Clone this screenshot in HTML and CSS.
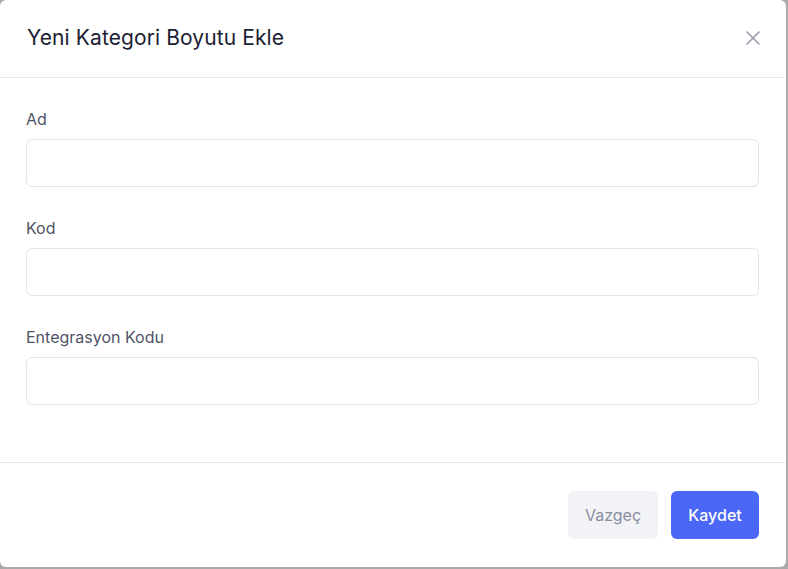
FILE: index.html
```html
<!DOCTYPE html>
<html lang="tr">
<head>
<meta charset="utf-8">
<title>Yeni Kategori Boyutu Ekle</title>
<link rel="stylesheet" href="styles.css">
</head>
<body>
<div class="modal">
  <header class="modal-header">
    <h2 class="modal-title">Yeni Kategori Boyutu Ekle</h2>
    <button class="close-btn" aria-label="Kapat">
      <svg width="14" height="14" viewBox="0 0 14 14"><path d="M1 1L13 13M13 1L1 13" stroke="currentColor" stroke-width="1.6" stroke-linecap="round"/></svg>
    </button>
  </header>
  <div class="modal-body">
    <div class="field">
      <label class="field-label">Ad</label>
      <input class="field-input" type="text">
    </div>
    <div class="field">
      <label class="field-label">Kod</label>
      <input class="field-input" type="text">
    </div>
    <div class="field">
      <label class="field-label">Entegrasyon Kodu</label>
      <input class="field-input" type="text">
    </div>
  </div>
  <footer class="modal-footer">
    <button class="btn btn-secondary">Vazgeç</button>
    <button class="btn btn-primary">Kaydet</button>
  </footer>
</div>
</body>
</html>
```
FILE: styles.css
```css
html, body {
  margin: 0;
  padding: 0;
  height: 100%;
}
body {
  background: #a9a9ab;
  font-family: Inter, "Noto Sans", sans-serif;
}
.modal {
  width: 786px;
  height: 567px;
  background: #fff;
  border-radius: 6px;
  display: flex;
  flex-direction: column;
  box-sizing: border-box;
}
.modal-header {
  height: 78px;
  box-sizing: border-box;
  border-bottom: 1px solid #e9e9ee;
  display: flex;
  align-items: center;
  justify-content: space-between;
  padding: 0 26px 2px 27px;
}
.modal-title {
  margin: 0;
  font-size: 21px;
  font-weight: 400;
  color: #1c2033;
  letter-spacing: 0.1px;
}
.close-btn {
  border: 0;
  background: none;
  padding: 0;
  color: #9a9aab;
  display: flex;
  cursor: pointer;
}
.modal-body {
  padding: 32px 27px 57px 26px;
  display: flex;
  flex-direction: column;
  gap: 32px;
  border-bottom: 1px solid #e9e9ee;
}
.field {
  display: flex;
  flex-direction: column;
  gap: 11px;
}
.field-label {
  font-size: 16px;
  line-height: 18px;
  color: #505366;
}
.field-input {
  height: 48px;
  box-sizing: border-box;
  border: 1px solid #e4e3ee;
  border-radius: 6px;
  background: #fff;
  font-family: inherit;
  font-size: 15px;
  padding: 0 14px;
  outline: none;
}
.modal-footer {
  flex: 1;
  display: flex;
  justify-content: flex-end;
  align-items: center;
  gap: 13px;
  padding: 0 27px 0 0;
}
.btn {
  height: 48px;
  border: 0;
  border-radius: 6px;
  font-family: inherit;
  font-size: 16px;
  cursor: pointer;
}
.btn-secondary {
  width: 90px;
  background: #f1f3f7;
  color: #8a8c9f;
}
.btn-primary {
  width: 88px;
  background: #4a67f5;
  color: #fff;
  font-weight: 500;
}
```
